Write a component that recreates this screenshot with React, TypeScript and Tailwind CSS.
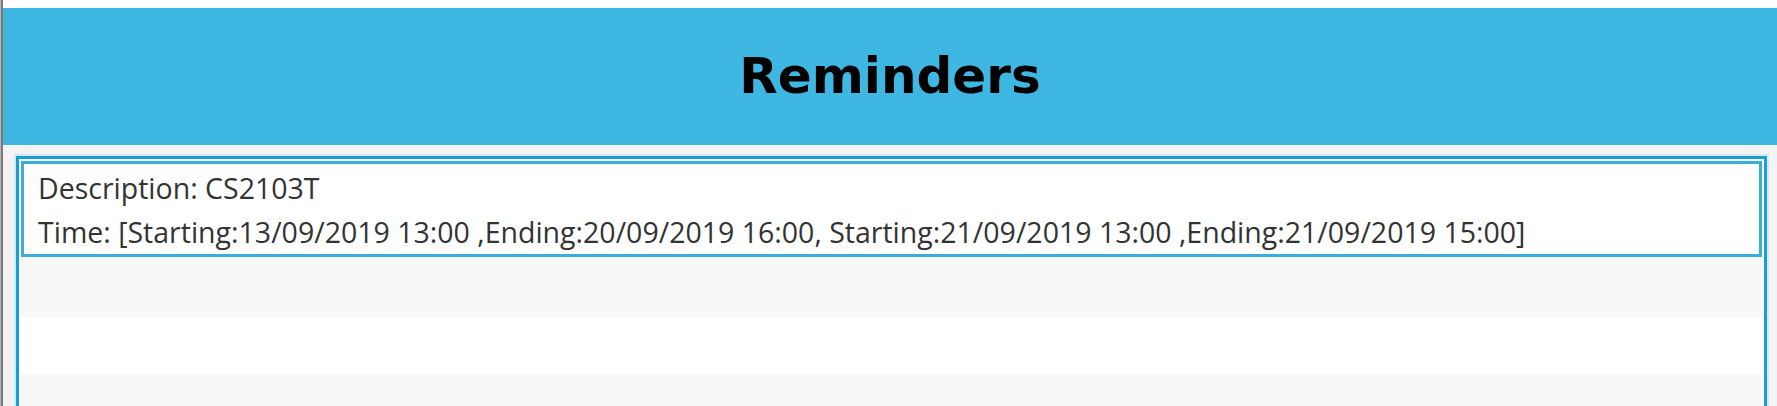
import React from "react";

const timeText =
  "Time: [Starting:13/09/2019 13:00 ,Ending:20/09/2019 16:00, Starting:21/09/2019 13:00 ,Ending:21/09/2019 15:00]";

export default function App() {
  return (
    <div className="flex h-[406px] w-[1777px] overflow-hidden bg-white">
      <div className="w-[3px] shrink-0 border-l border-[#b8b8b8] bg-[#7a7a7a]" />
      <div className="flex min-w-0 flex-1 flex-col">
        <div className="h-[8px] shrink-0 bg-white" />
        <header className="flex h-[137px] shrink-0 items-center justify-center bg-[#3eb8e3]">
          <h1 className="text-[50px] font-bold text-black [font-family:'DejaVu_Sans',sans-serif]">
            Reminders
          </h1>
        </header>
        <div className="flex-1 bg-[#f3f3f3] pl-[13px] pr-[10px] pt-[11px]">
          <div className="h-[400px] border-[3px] border-[#1a9fd5] bg-white shadow-[0_0_0_2px_#d3eaf4]">
            <div className="bg-white px-[2px] pt-[2px]">
              <div className="border-[3px] border-[#3aaedb] px-[14px] pt-[2px] text-[28.5px] leading-[44px] text-[#333333] [font-family:'Open_Sans',sans-serif]">
                <div>Description: CS2103T</div>
                <div className="whitespace-nowrap">{timeText}</div>
              </div>
            </div>
            <div className="h-[60px] bg-[#f8f8f8]" />
            <div className="h-[57px] bg-white" />
            <div className="h-[60px] bg-[#f8f8f8]" />
          </div>
        </div>
      </div>
    </div>
  );
}
